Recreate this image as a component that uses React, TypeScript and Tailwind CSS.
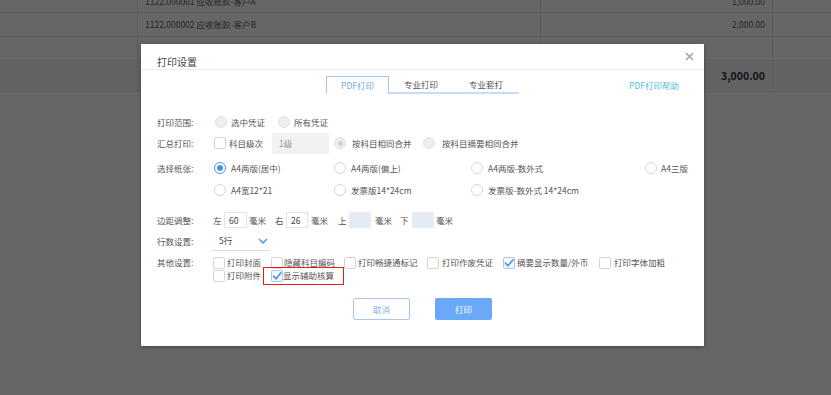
import React from "react";

type RState = "normal" | "disabled" | "disabledChecked" | "checked";

const Radio = ({ state }: { state: RState }) => {
  if (state === "checked")
    return (
      <span className="w-[12px] h-[12px] shrink-0 rounded-full border border-[#4a90e2] bg-white flex items-center justify-center">
        <span className="w-[6px] h-[6px] rounded-full bg-[#4a90e2]" />
      </span>
    );
  if (state === "disabledChecked")
    return (
      <span className="w-[12px] h-[12px] shrink-0 rounded-full border border-[#dedede] bg-[#efefef] flex items-center justify-center">
        <span className="w-[5px] h-[5px] rounded-full bg-[#cfcfcf]" />
      </span>
    );
  if (state === "disabled")
    return <span className="w-[12px] h-[12px] shrink-0 rounded-full border border-[#e2e2e2] bg-[#eeeeee]" />;
  return <span className="w-[12px] h-[12px] shrink-0 rounded-full border border-[#d6d6d6] bg-white" />;
};

const Check = ({ checked }: { checked?: boolean }) =>
  checked ? (
    <span className="w-[12px] h-[12px] shrink-0 rounded-[2px] border border-[#a9c8ef] bg-[#f3f8fe] flex items-center justify-center">
      <svg width="10" height="10" viewBox="0 0 10 10">
        <polyline points="1.5,5.2 4,7.8 9,1.8" fill="none" stroke="#4a8fe0" strokeWidth="1.6" strokeLinecap="round" strokeLinejoin="round" />
      </svg>
    </span>
  ) : (
    <span className="w-[12px] h-[12px] shrink-0 rounded-[2px] border border-[#d4d4d4] bg-white" />
  );

const TableRow = ({ h, code, amount, total, extra }: { h: string; code?: string; amount?: string; total?: boolean; extra?: string }) => (
  <div className={`flex border-b border-[#e6e6e6] ${h} ${total ? "bg-[#f5f7fa]" : ""} ${extra ?? ""}`}>
    <div className="w-[138px] border-r border-[#e6e6e6]" />
    <div className="w-[403px] border-r border-[#e6e6e6] flex items-center pl-[7px] text-[8.5px] text-[#666]">{code}</div>
    <div
      className={`w-[232px] border-r border-[#e6e6e6] flex items-center justify-end pr-[7px] ${
        total ? "text-[10.5px] font-bold text-[#333]" : "text-[8.5px] text-[#666]"
      }`}
    >
      {amount}
    </div>
    <div className="flex-1" />
  </div>
);

export default function App() {
  return (
    <div className="relative w-[831px] h-[395px] overflow-hidden bg-white font-['Noto_Sans_CJK_SC','Noto_Sans',sans-serif]">
      {/* background page */}
      <div className="flex flex-col">
        <TableRow h="h-[23px]" extra="mt-[-10px]" code="1122.000001 应收账款-客户A" amount="1,000.00" />
        <TableRow h="h-[24px]" code="1122.000002 应收账款-客户B" amount="2,000.00" />
        <TableRow h="h-[24px]" />
        <TableRow h="h-[31px]" total amount="3,000.00" />
      </div>

      {/* overlay */}
      <div className="absolute inset-0 bg-black/60" />

      {/* modal */}
      <div className="absolute left-[141px] top-[44px] w-[563px] h-[302px] bg-white shadow-[0_1px_4px_rgba(0,0,0,0.35)] text-[8.5px] text-[#555] leading-none">
        <div className="h-[26px] border-b border-[#eeeeee] pl-[16px] pt-[13px] text-[10px] text-[#444]">打印设置</div>
        <div className="absolute right-[10px] top-[8px]">
          <svg width="9" height="9" viewBox="0 0 9 9">
            <path d="M1 1 L8 8 M8 1 L1 8" stroke="#9a9a9a" strokeWidth="1.3" />
          </svg>
        </div>

        {/* tabs */}
        <div className="flex items-end mt-[6px] pl-[185px]">
          <div className="w-[63px] h-[18px] border border-b-0 border-[#a7c7f2] text-[#76a5e8] flex items-center justify-center">PDF打印</div>
          <div className="w-[64px] h-[18px] border-b-2 border-[#c9dcf6] flex items-center justify-center">专业打印</div>
          <div className="w-[66px] h-[18px] border-b-2 border-[#c9dcf6] flex items-center justify-center">专业套打</div>
          <div className="ml-[110px] mb-[5px] text-[#4fbfd8]">PDF打印帮助</div>
        </div>

        {/* form */}
        <div className="pl-[16px] flex flex-col">
          {/* 打印范围 */}
          <div className="flex items-center h-[20px] mt-[18px]">
            <div className="w-[56px]">打印范围:</div>
            <div className="flex items-center w-[63px] ml-[2px]">
              <Radio state="disabled" />
              <span className="ml-[4px]">选中凭证</span>
            </div>
            <div className="flex items-center">
              <Radio state="disabled" />
              <span className="ml-[4px]">所有凭证</span>
            </div>
          </div>

          {/* 汇总打印 */}
          <div className="flex items-center h-[22px]">
            <div className="w-[56px]">汇总打印:</div>
            <div className="flex items-center w-[58px] ml-[1px]">
              <Check />
              <span className="ml-[3px]">科目级次</span>
            </div>
            <div className="w-[57px] h-[21px] bg-[#f2f2f2] text-[#999] flex items-center pl-[7px]">1级</div>
            <div className="flex items-center w-[89px] ml-[5px]">
              <Radio state="disabledChecked" />
              <span className="ml-[6px]">按科目相同合并</span>
            </div>
            <div className="flex items-center">
              <Radio state="disabled" />
              <span className="ml-[7px]">按科目摘要相同合并</span>
            </div>
          </div>

          {/* 选择纸张 */}
          <div className="flex mt-[3px]">
            <div className="w-[56px] h-[22px] flex items-center">选择纸张:</div>
            <div className="ml-[1px] grid grid-cols-[120px_137px_174px_1fr] auto-rows-[22px]">
              <div className="flex items-center">
                <Radio state="checked" />
                <span className="ml-[5px]">A4两版(居中)</span>
              </div>
              <div className="flex items-center">
                <Radio state="normal" />
                <span className="ml-[5px]">A4两版(偏上)</span>
              </div>
              <div className="flex items-center">
                <Radio state="normal" />
                <span className="ml-[5px]">A4两版-数外式</span>
              </div>
              <div className="flex items-center">
                <Radio state="normal" />
                <span className="ml-[4px]">A4三版</span>
              </div>
              <div className="flex items-center">
                <Radio state="normal" />
                <span className="ml-[5px]">A4宽12*21</span>
              </div>
              <div className="flex items-center">
                <Radio state="normal" />
                <span className="ml-[5px]">发票版14*24cm</span>
              </div>
              <div className="flex items-center">
                <Radio state="normal" />
                <span className="ml-[5px]">发票版-数外式 14*24cm</span>
              </div>
            </div>
          </div>

          {/* 边距调整 */}
          <div className="flex items-center h-[16px] mt-[11px]">
            <div className="w-[56px]">边距调整:</div>
            <div className="w-[11px]">左</div>
            <div className="w-[23px] h-[16px] border border-[#e3e3e3] flex items-center pl-[4px] text-[#444]">60</div>
            <div className="w-[26px] ml-[2px]">毫米</div>
            <div className="w-[11px]">右</div>
            <div className="w-[22px] h-[16px] border border-[#e3e3e3] flex items-center pl-[4px] text-[#444]">26</div>
            <div className="w-[27px] ml-[3px]">毫米</div>
            <div className="w-[11px]">上</div>
            <div className="w-[22px] h-[16px] bg-[#e5ebf4]" />
            <div className="w-[25px] ml-[4px]">毫米</div>
            <div className="w-[12px]">下</div>
            <div className="w-[22px] h-[16px] bg-[#e5ebf4]" />
            <div className="ml-[2px]">毫米</div>
          </div>

          {/* 行数设置 */}
          <div className="flex items-center h-[20px] mt-[3px]">
            <div className="w-[56px]">行数设置:</div>
            <div className="ml-[-1px] w-[58px] h-[20px] border-b border-[#dddddd] flex items-center justify-between pl-[7px] pr-[2px]">
              <span className="text-[#444]">5行</span>
              <svg width="10" height="6" viewBox="0 0 10 6">
                <polyline points="1,1 5,5 9,1" fill="none" stroke="#4a90e2" strokeWidth="1.4" />
              </svg>
            </div>
          </div>

          {/* 其他设置 */}
          <div className="flex mt-[5px]">
            <div className="w-[56px] h-[13px] flex items-center">其他设置:</div>
            <div className="flex flex-col">
              <div className="flex items-center h-[13px]">
                <div className="flex items-center w-[58px]">
                  <Check />
                  <span className="ml-[2px]">打印封面</span>
                </div>
                <div className="flex items-center w-[73px]">
                  <Check />
                  <span className="ml-[1px]">隐藏科目编码</span>
                </div>
                <div className="flex items-center w-[83px]">
                  <Check />
                  <span className="ml-[2px]">打印畅捷通标记</span>
                </div>
                <div className="flex items-center w-[76px]">
                  <Check />
                  <span className="ml-[3px]">打印作废凭证</span>
                </div>
                <div className="flex items-center w-[96px]">
                  <Check checked />
                  <span className="ml-[2px]">摘要显示数量/外币</span>
                </div>
                <div className="flex items-center">
                  <Check />
                  <span className="ml-[3px]">打印字体加粗</span>
                </div>
              </div>
              <div className="flex items-center h-[13px]">
                <div className="flex items-center w-[58px]">
                  <Check />
                  <span className="ml-[2px]">打印附件</span>
                </div>
                <div className="relative flex items-center">
                  <Check checked />
                  <span className="ml-[0px]">显示辅助核算</span>
                  <div className="absolute left-[-8px] top-[-3px] w-[81px] h-[18px] border-[1.5px] border-[#e51c1c]" />
                </div>
              </div>
            </div>
          </div>

          {/* buttons */}
          <div className="flex justify-center gap-[25px] mt-[16px] pr-[16px]">
            <div className="w-[57px] h-[22px] rounded-[2px] border border-[#a9c6ee] text-[#8aaedc] flex items-center justify-center">取消</div>
            <div className="w-[57px] h-[22px] rounded-[2px] bg-[#6aa9f7] text-white flex items-center justify-center">打印</div>
          </div>
        </div>
      </div>
    </div>
  );
}
